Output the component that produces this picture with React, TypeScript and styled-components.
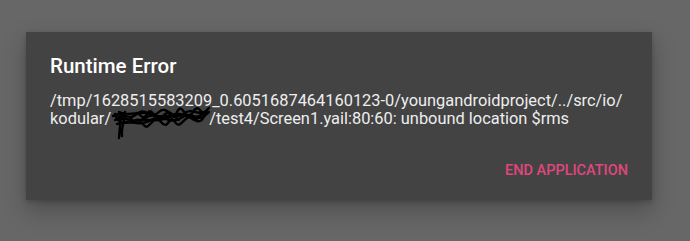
import React from "react";
import styled, { createGlobalStyle } from "styled-components";

const Global = createGlobalStyle`
  html, body { margin: 0; padding: 0; background: #676767; }
  body { font-family: Roboto, "Noto Sans", sans-serif; }
`;

const Page = styled.div`
  width: 690px;
  height: 241px;
  padding: 32px 0 0 26px;
  box-sizing: border-box;
  background: #676767;
`;

const Dialog = styled.div`
  width: 626px;
  height: 168px;
  box-sizing: border-box;
  background: #434343;
  padding: 22px 24px 0 24px;
  display: flex;
  flex-direction: column;
  box-shadow: 0 10px 22px rgba(0, 0, 0, 0.26), 0 2px 5px rgba(0, 0, 0, 0.18);
`;

const Title = styled.div`
  color: #ffffff;
  font-size: 20.5px;
  line-height: 24px;
  font-weight: 500;
`;

const Message = styled.div`
  margin-top: 14px;
  color: #eeeeee;
  font-size: 16.4px;
  line-height: 18px;
`;

const Redacted = styled.span`
  position: relative;
  display: inline-block;
  width: 98px;
  height: 18px;
  vertical-align: top;
`;

const Scribble = styled.svg`
  position: absolute;
  left: 0;
  top: -4px;
  width: 100px;
  height: 34px;
  overflow: visible;
`;

const Actions = styled.div`
  margin-top: auto;
  display: flex;
  justify-content: flex-end;
  padding-bottom: 20px;
`;

const ActionButton = styled.button`
  background: none;
  border: none;
  padding: 0;
  font-family: Roboto, "Noto Sans", sans-serif;
  font-size: 14.5px;
  font-weight: 500;
  color: #e0477d;
  text-transform: uppercase;
  line-height: 18px;
  cursor: pointer;
`;

export default function App() {
  return (
    <>
      <Global />
      <Page>
        <Dialog>
          <Title>Runtime Error</Title>
          <Message>
            /tmp/1628515583209_0.6051687464160123-0/youngandroidproject/../src/io/
            <br />
            kodular/
            <Redacted>
              <Scribble viewBox="0 0 100 34">
                <path
                  d="M2 10 C10 4, 18 16, 26 8 S40 14, 48 6 S62 16, 72 8 S88 12, 96 4 M4 14 C14 8, 22 20, 34 12 S50 18, 60 10 S78 18, 92 8 M6 18 C16 12, 28 22, 40 14 S58 20, 70 12 S84 16, 94 10 M8 6 C20 12, 30 2, 44 10 S66 2, 80 12 S92 6, 98 2 M10 8 L8 32 M14 10 C12 18, 10 24, 11 30 M20 16 C30 10, 44 18, 56 12 S74 8, 86 14 M6 12 C12 6, 16 20, 22 10 S30 18, 36 8 S44 20, 52 10 S60 18, 66 6 S74 18, 82 6 S90 16, 98 6 M12 16 C20 20, 26 8, 32 18 S42 6, 50 16 S58 6, 64 16 S74 4, 86 12 M4 8 C6 16, 10 18, 14 6 M40 6 C48 16, 58 4, 68 14"
                  fill="none"
                  stroke="#000"
                  strokeWidth="2.4"
                  strokeLinecap="round"
                />
              </Scribble>
            </Redacted>
            /test4/Screen1.yail:80:60: unbound location $rms
          </Message>
          <Actions>
            <ActionButton>End Application</ActionButton>
          </Actions>
        </Dialog>
      </Page>
    </>
  );
}
